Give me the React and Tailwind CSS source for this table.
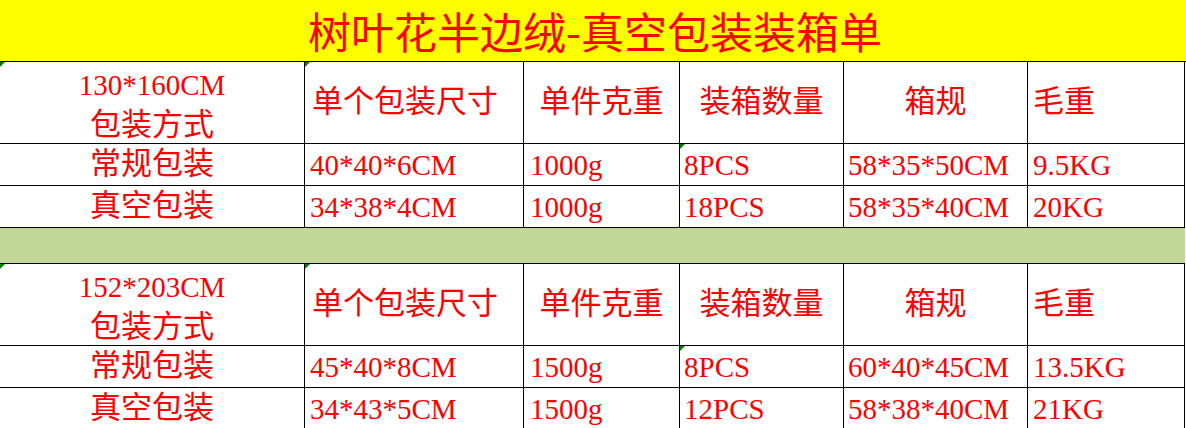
import React from "react";

const cols = "grid grid-cols-[305px_219px_156px_164px_184px_157px]";

const sections = [
  {
    size: "130*160CM",
    rows: [
      ["常规包装", "40*40*6CM", "1000g", "8PCS", "58*35*50CM", "9.5KG"],
      ["真空包装", "34*38*4CM", "1000g", "18PCS", "58*35*40CM", "20KG"],
    ],
  },
  {
    size: "152*203CM",
    rows: [
      ["常规包装", "45*40*8CM", "1500g", "8PCS", "60*40*45CM", "13.5KG"],
      ["真空包装", "34*43*5CM", "1500g", "12PCS", "58*38*40CM", "21KG"],
    ],
  },
];

function Flag() {
  return (
    <span className="absolute left-0 top-0 w-0 h-0 border-t-[5px] border-r-[5px] border-t-[#008000] border-r-transparent" />
  );
}

function Cell({ children, className = "", flag }) {
  return (
    <div
      className={
        "relative flex items-center border-r border-b border-black overflow-hidden whitespace-nowrap " +
        className
      }
    >
      {flag && <Flag />}
      {children}
    </div>
  );
}

function Section({ size, rows }) {
  return (
    <>
      <div className={cols + " h-[82px]"}>
        <Cell flag className="flex-col justify-center leading-[40px] pt-1">
          <span className="text-[29px]">{size}</span>
          <span>包装方式</span>
        </Cell>
        <Cell flag className="pl-[7px]">单个包装尺寸</Cell>
        <Cell className="justify-center">单件克重</Cell>
        <Cell className="justify-center">装箱数量</Cell>
        <Cell className="justify-center">箱规</Cell>
        <Cell className="pl-[5px]">毛重</Cell>
      </div>
      {rows.map((r, i) => (
        <div key={i} className={cols + " h-[42px]"}>
          <Cell className="justify-center">{r[0]}</Cell>
          <Cell className="pl-[5px] text-[29px] pt-[2px]">{r[1]}</Cell>
          <Cell className="pl-[6px] text-[29px] pt-[2px]">{r[2]}</Cell>
          <Cell flag={i === 0} className="pl-[4px] text-[29px] pt-[2px]">{r[3]}</Cell>
          <Cell className="pl-[4px] text-[29px] pt-[2px]">{r[4]}</Cell>
          <Cell className="pl-[5px] text-[29px] pt-[2px]">{r[5]}</Cell>
        </div>
      ))}
    </>
  );
}

export default function App() {
  return (
    <div className="w-[1186px] h-[428px] overflow-hidden bg-white text-[#ff0000] text-[31px] font-['Liberation_Serif','Noto_Sans_CJK_SC',serif]">
      <div className="h-[62px] bg-[#ffff00] border-b border-black flex items-center justify-center text-[43px] font-['Noto_Sans_CJK_SC',sans-serif] leading-none pl-[4px]">
        树叶花半边绒-真空包装装箱单
      </div>
      <Section {...sections[0]} />
      <div className="h-[36px] w-[1185px] bg-[#c4d79b] border-b border-black" />
      <Section {...sections[1]} />
    </div>
  );
}
